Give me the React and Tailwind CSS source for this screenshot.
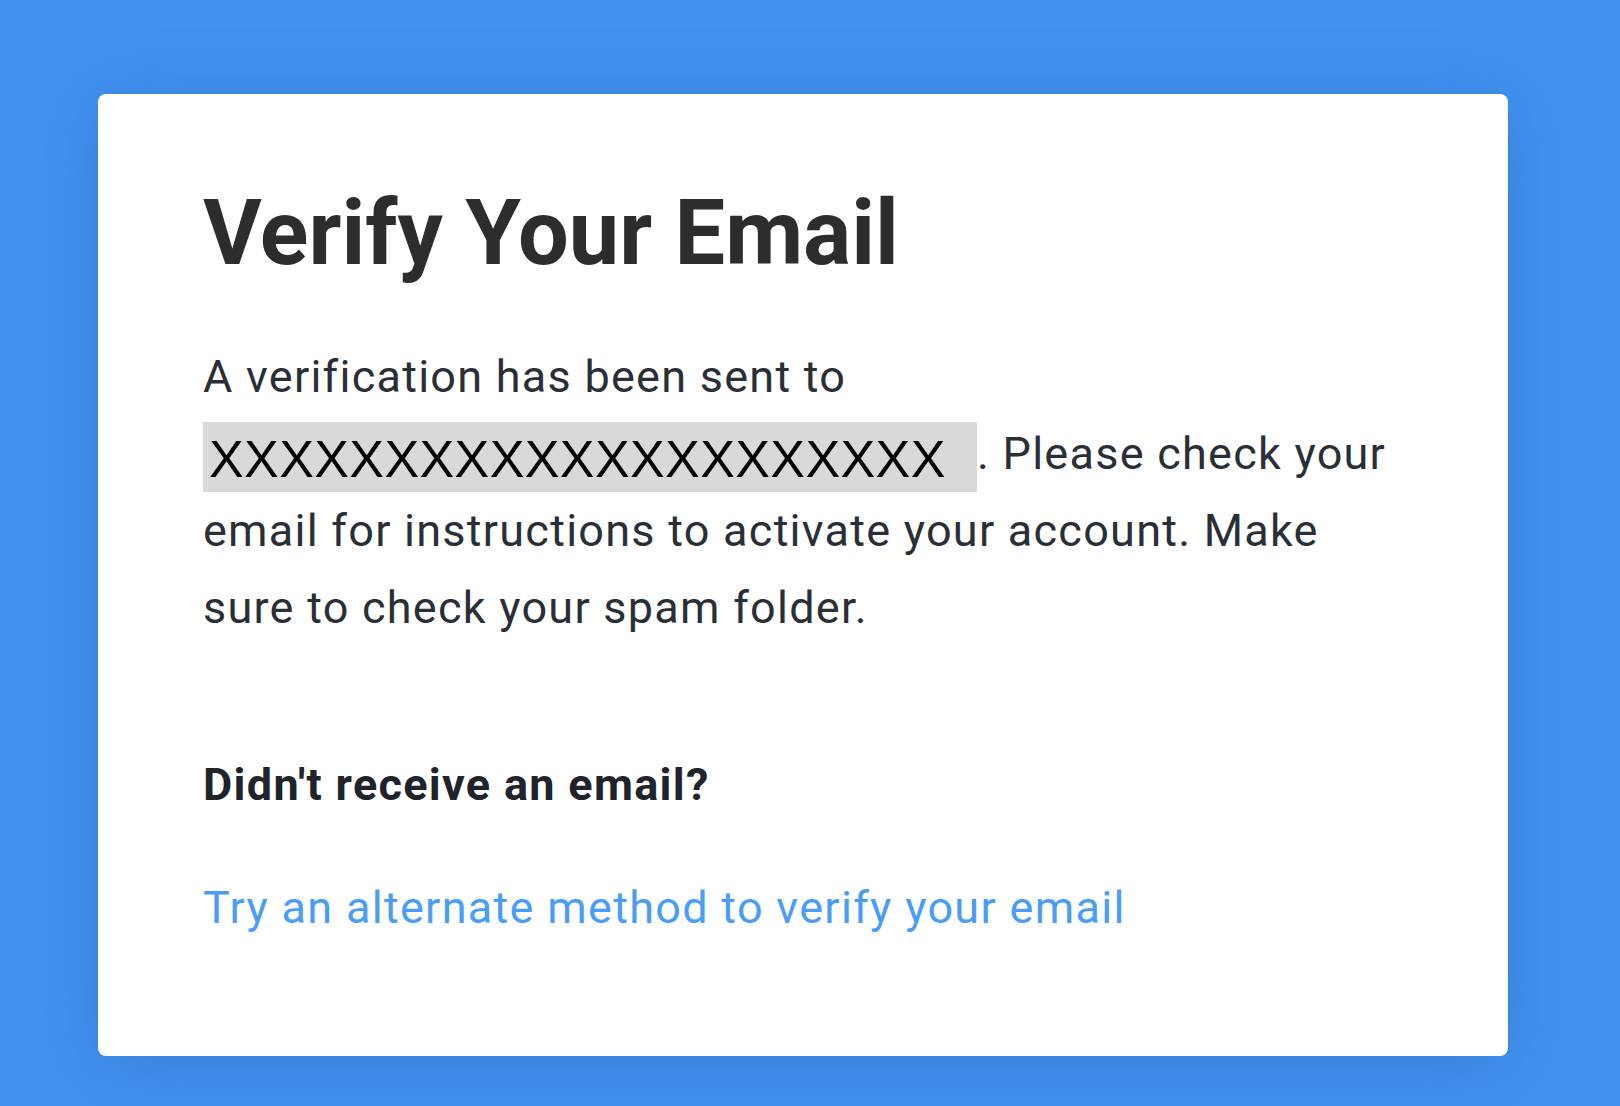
// App.jsx
export default function App() {
  const masked = "XXXXXXXXXXXXXXXXXXXXX";

  return (
    <div className="min-h-[1106px] w-full bg-[#4293f1] pt-[94px] pl-[98px] font-['Roboto',sans-serif]">
      <div className="w-[1410px] h-[962px] rounded-[8px] bg-white pt-[86px] pl-[105px] pr-[105px] shadow-[0_8px_70px_rgba(25,70,150,0.3)]">
        <h1 className="text-[90px] leading-[108px] font-bold text-[#2d2d2d]">Verify Your Email</h1>

        <p className="mt-[50px] text-[45px] leading-[77px] tracking-[1.25px] text-[#2a2e36]">
          A verification has been sent to{" "}
          <span className="inline-block h-[70px] w-[774px] bg-[#d9d9d9] pl-[6px] pt-[2px] align-[-8px] font-['Liberation_Sans',Arial,sans-serif] text-[52px] leading-[70px] tracking-[0.4px] text-black">
            {masked}
          </span>
          . Please check your email for instructions to activate your account. Make sure to
          check your spam folder.
        </p>

        <h2 className="mt-[100px] text-[45px] leading-[77px] tracking-[1.3px] font-bold text-[#1f232b]">
          Didn't receive an email?
        </h2>

        <a href="#" className="mt-[46px] block text-[45px] leading-[77px] tracking-[1.3px] text-[#4a9df7]">
          Try an alternate method to verify your email
        </a>
      </div>
    </div>
  );
}
